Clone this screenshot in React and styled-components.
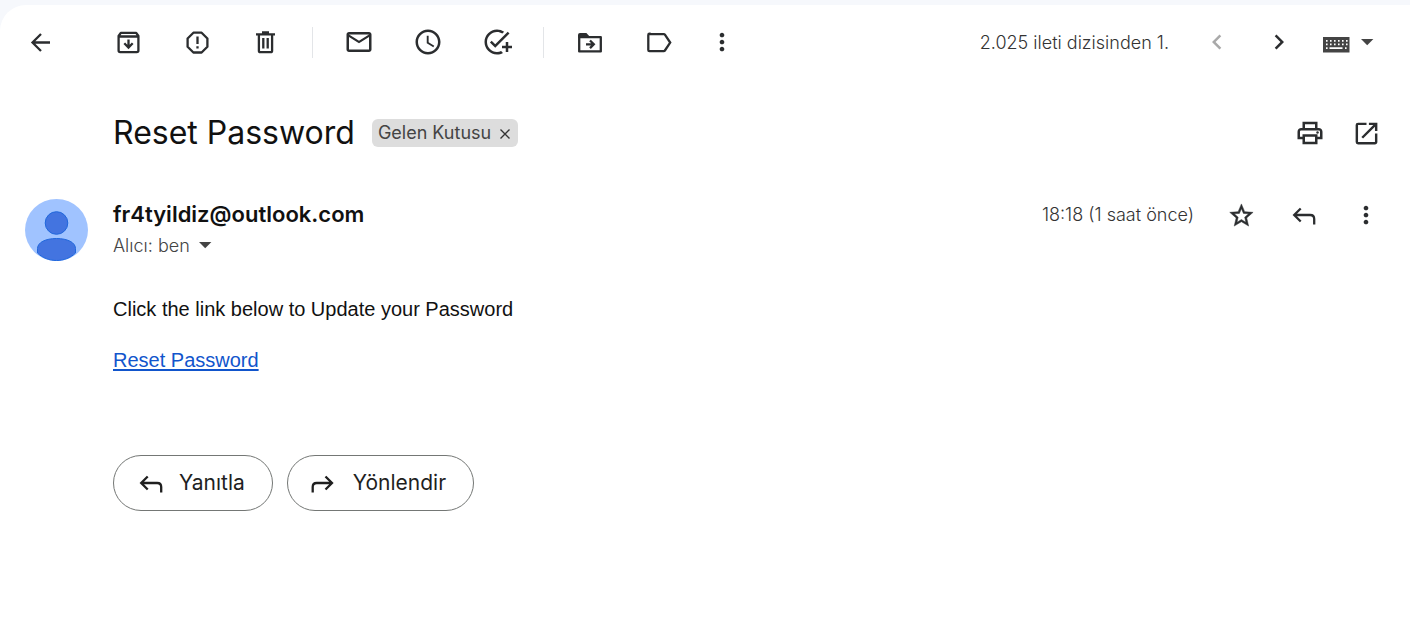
import React from "react";
import styled, { createGlobalStyle } from "styled-components";
import {
  MdMailOutline,
  MdAccessTime,
  MdAddTask,
  MdOutlinePrint,
  MdOpenInNew,
  MdChevronLeft,
  MdChevronRight,
  MdMoreVert,
} from "react-icons/md";

const GlobalStyle = createGlobalStyle`
  * { box-sizing: border-box; }
  body {
    margin: 0;
    background: #f6f8fc;
    color: #1f1f1f;
    font-family: Inter, "Liberation Sans", sans-serif;
  }
`;

const Page = styled.div`
  min-height: 100vh;
  padding-top: 5px;
  display: flex;
`;

const Card = styled.main`
  flex: 1;
  min-width: 0;
  background: #fff;
  border-radius: 26px 0 0 0;
  padding: 15px 22px 48px 0;
`;

const Toolbar = styled.header`
  display: flex;
  align-items: center;
  justify-content: space-between;
  padding-left: 18px;
`;

const ToolGroup = styled.div`
  display: flex;
  align-items: center;
  gap: ${(p) => p.$gap}px;
`;

const IconButton = styled.button`
  display: inline-flex;
  align-items: center;
  justify-content: center;
  flex: none;
  width: ${(p) => (p.$narrow ? 32 : 44)}px;
  height: 44px;
  padding: 0;
  border: 0;
  border-radius: 22px;
  background: none;
  color: ${(p) => (p.$muted ? "#a9a9a9" : "#2b2d2f")};
  cursor: pointer;

  svg { display: block; flex: none; }
`;

const BackButton = styled(IconButton)`
  margin-right: 44px;
`;

const Tools = styled.div`
  display: flex;
  align-items: center;
  gap: 25px;
`;

const Divider = styled.span`
  width: 1px;
  height: 31px;
  margin: 0 24px;
  background: #e3e5e8;
`;

const Counter = styled.span`
  margin-right: 8px;
  padding-top: 2px;
  font-size: 18px;
  font-weight: 300;
  line-height: 24px;
  color: #333;
  white-space: nowrap;
`;

const InputToolButton = styled(IconButton)`
  width: auto;
  gap: 11px;
  padding: 0 14px 0 4px;
`;

const SubjectRow = styled.div`
  display: flex;
  align-items: center;
  justify-content: space-between;
  margin-top: 47px;
  padding-left: 113px;
`;

const SubjectTitle = styled.div`
  display: flex;
  align-items: center;
  gap: 17px;
`;

const Subject = styled.h1`
  margin: 0;
  font-size: 32px;
  font-weight: 400;
  line-height: 44px;
  color: #111;
  white-space: nowrap;
`;

const Chip = styled.span`
  display: inline-flex;
  align-items: center;
  gap: 8px;
  height: 28px;
  padding: 0 7px 0 6px;
  border-radius: 6px;
  background: #ddd;
  color: #444;
  font-size: 18px;
  line-height: 24px;
  white-space: nowrap;
`;

const ChipClose = styled.button`
  display: flex;
  padding: 2px 0 0;
  border: 0;
  background: none;
  color: #333;
  cursor: pointer;
`;

const Message = styled.article`
  display: grid;
  grid-template-columns: 63px 1fr;
  column-gap: 25px;
  margin-top: 44px;
  padding-left: 25px;
`;

const SenderRow = styled.div`
  display: flex;
  align-items: flex-start;
  justify-content: space-between;
`;

const Sender = styled.h2`
  margin: 0;
  font-size: 22px;
  font-weight: 600;
  line-height: 31px;
  color: #111;
  white-space: nowrap;
`;

const Recipient = styled.button`
  display: flex;
  align-items: center;
  gap: 9px;
  padding: 0;
  border: 0;
  background: none;
  color: #444;
  font-family: inherit;
  font-size: 18px;
  font-weight: 300;
  line-height: 31px;
  cursor: pointer;
`;

const MessageActions = styled.div`
  display: flex;
  align-items: center;
  gap: 18px;
  height: 31px;
`;

const Time = styled.time`
  margin-right: 8px;
  font-size: 18px;
  font-weight: 300;
  color: #333;
  white-space: nowrap;
`;

const Content = styled.div`
  grid-column: 2;
  display: flex;
  flex-direction: column;
  align-items: flex-start;
  gap: 27px;
  margin-top: 36px;
  font-family: "Liberation Sans", Arial, sans-serif;
  font-size: 20px;
  line-height: 24px;
  color: #111;
`;

const Paragraph = styled.p`
  margin: 0;
`;

const ResetLink = styled.a`
  color: #15c;
  text-decoration: underline;
  text-underline-offset: 2px;
  text-decoration-thickness: 2px;
`;

const Replies = styled.div`
  grid-column: 2;
  display: flex;
  gap: 14px;
  margin-top: 83px;
`;

const ReplyButton = styled.button`
  display: inline-flex;
  align-items: center;
  gap: 14px;
  height: 56px;
  padding: 0 27px 0 23px;
  border: 1px solid #747775;
  border-radius: 28px;
  background: #fff;
  color: #1f1f1f;
  font-family: inherit;
  font-size: 21px;
  font-weight: 400;
  line-height: 28px;
  cursor: pointer;
`;

const Icon = ({ children }) => (
  <svg
    width="28"
    height="28"
    viewBox="0 0 28 28"
    fill="none"
    stroke="currentColor"
    strokeWidth="2.3"
    aria-hidden="true"
  >
    {children}
  </svg>
);

const BackIcon = () => (
  <Icon>
    <path d="M24 14.5H6.5M15 6l-8.5 8.5L15 23" />
  </Icon>
);

const ArchiveIcon = () => (
  <Icon>
    <path d="M4.6 8v14.6q0 1.6 1.6 1.6h16.6q1.6 0 1.6-1.6V8l-2.2-3.2H6.8zM4.6 8.5h19.8" strokeLinejoin="round" />
    <path d="M14.5 11.5v7.5M10.3 15.3l4.2 4.2 4.2-4.2" />
  </Icon>
);

const SpamIcon = () => (
  <Icon>
    <path d="M10.4 4.7h8.2l5.8 5.8v8.2l-5.8 5.8h-8.2l-5.8-5.8v-8.2z" strokeLinejoin="round" />
    <path d="M14.5 8.5V16M14.5 18.2v2.3" />
  </Icon>
);

const TrashIcon = () => (
  <Icon>
    <path d="M4 6.3h19M10 4.4h7" />
    <path d="M6.9 6.5v16.2q0 1.5 1.5 1.5h10.2q1.5 0 1.5-1.5V6.5M11.3 10v10.6M15.7 10v10.6" />
  </Icon>
);

const MoveIcon = () => (
  <Icon>
    <path d="M3.2 9.2h21.6v14.2H3.2z" strokeLinejoin="round" />
    <path d="M2 9.5V7q0-2 2-2h6.4l3 3.2v1.6H2z" fill="currentColor" stroke="none" />
    <path d="M10 16.3h7.5M14 12.5l3.8 3.8-3.8 3.8" />
  </Icon>
);

const LabelIcon = () => (
  <Icon>
    <path d="M4.5 6.1h14.3q.7 0 1.1.6l5.3 7.9-5.3 7.9q-.4.6-1.1.6H4.5q-1.2 0-1.2-1.2v-15q0-1.2 1.2-1.2z" />
  </Icon>
);

const StarIcon = () => (
  <svg width="28" height="28" viewBox="0.5 -0.5 24 24" fill="currentColor" stroke="currentColor" strokeWidth="0.4" aria-hidden="true">
    <path d="M22 9.24l-7.19-.62L12 2 9.19 8.63 2 9.24l5.46 4.73L5.82 21 12 17.27 18.18 21l-1.63-7.03L22 9.24zM12 15.4l-3.76 2.27 1-4.28-3.32-2.88 4.38-.38L12 6.1l1.71 4.04 4.38.38-3.32 2.88 1 4.28L12 15.4z" />
  </svg>
);

const keyColumns = [3, 7, 11, 15, 19, 23];

const KeyboardIcon = () => (
  <svg width="27" height="28" viewBox="0 0 27 28" aria-hidden="true">
    <path d="M0 9h26.5v15.5H0z" fill="#444" />
    {keyColumns.map((x) => (
      <path key={x} d={`M${x} 12h1.6v1.8h-1.6zM${x} 15.5h1.6v1.8h-1.6z`} fill="#fff" />
    ))}
    <path d="M3 19.3h1.6V21H3zM6.5 19.3h13V21h-13zM22 19.3h1.6V21H22z" fill="#fff" />
  </svg>
);

const CaretIcon = () => (
  <svg width="13" height="7" viewBox="0 0 13 7" aria-hidden="true">
    <path d="M0 0h12.4L6.2 6.3z" fill="#444" />
  </svg>
);

const ReplyIcon = ({ forward }) => (
  <Icon>
    <path
      d={
        forward
          ? "M1.7 23.5V18q0-4 4-4H21M14.5 7.5L21 14l-6.5 6.5"
          : "M24.2 23.5V18q0-4-4-4h-16M10.7 7.5L4.2 14l6.5 6.5"
      }
    />
  </Icon>
);

const CloseIcon = () => (
  <svg width="12" height="12" viewBox="0 0 12 12" fill="none" stroke="currentColor" strokeWidth="1.4" aria-hidden="true">
    <path d="M1.5 1.5l9 9M10.5 1.5l-9 9" />
  </svg>
);

const Avatar = () => (
  <svg width="63" height="62" viewBox="0 0 63 62" role="img" aria-label="Profil">
    <ellipse cx="31.5" cy="31" rx="31.5" ry="31" fill="#a0c3ff" />
    <g fill="#4374e0" stroke="#2067dc">
      <circle cx="31.5" cy="24" r="11.3" />
      <path d="M12.5 54v-4.500c0-6 8-10 19-10s19 4 19 10V54c-5 5-12 7.500-19 7.500s-14-2.500-19-7.500z" />
    </g>
  </svg>
);

export default function App() {
  return (
    <>
      <GlobalStyle />
      <Page>
        <Card>
          <Toolbar>
            <ToolGroup $gap={0}>
              <BackButton aria-label="Geri"><BackIcon /></BackButton>
              <Tools>
                <IconButton aria-label="Arşivle"><ArchiveIcon /></IconButton>
                <IconButton aria-label="Spam bildir"><SpamIcon /></IconButton>
                <IconButton aria-label="Sil"><TrashIcon /></IconButton>
              </Tools>
              <Divider />
              <Tools>
                <IconButton aria-label="Okunmadı olarak işaretle"><MdMailOutline size={30} /></IconButton>
                <IconButton aria-label="Ertele"><MdAccessTime size={30} /></IconButton>
                <IconButton aria-label="Görevlere ekle"><MdAddTask size={30} /></IconButton>
              </Tools>
              <Divider />
              <Tools>
                <IconButton aria-label="Taşı"><MoveIcon /></IconButton>
                <IconButton aria-label="Etiketler"><LabelIcon /></IconButton>
                <IconButton $narrow aria-label="Diğer"><MdMoreVert size={28} /></IconButton>
              </Tools>
            </ToolGroup>
            <ToolGroup $gap={18}>
              <Counter>2.025 ileti dizisinden 1.</Counter>
              <IconButton $muted aria-label="Daha yeni"><MdChevronLeft size={30} /></IconButton>
              <IconButton aria-label="Daha eski"><MdChevronRight size={30} /></IconButton>
              <InputToolButton aria-label="Giriş araçları">
                <KeyboardIcon />
                <CaretIcon />
              </InputToolButton>
            </ToolGroup>
          </Toolbar>

          <SubjectRow>
            <SubjectTitle>
              <Subject>Reset Password</Subject>
              <Chip>
                Gelen Kutusu
                <ChipClose aria-label="Etiketi kaldır"><CloseIcon /></ChipClose>
              </Chip>
            </SubjectTitle>
            <ToolGroup $gap={12}>
              <IconButton aria-label="Yazdır"><MdOutlinePrint size={30} /></IconButton>
              <IconButton aria-label="Yeni pencerede aç"><MdOpenInNew size={29} /></IconButton>
            </ToolGroup>
          </SubjectRow>

          <Message>
            <Avatar />
            <SenderRow>
              <div>
                <Sender>fr4tyildiz@outlook.com</Sender>
                <Recipient>
                  Alıcı: ben
                  <CaretIcon />
                </Recipient>
              </div>
              <MessageActions>
                <Time>18:18 (1 saat önce)</Time>
                <IconButton aria-label="Yıldız ekle"><StarIcon /></IconButton>
                <IconButton aria-label="Yanıtla"><ReplyIcon /></IconButton>
                <IconButton aria-label="Diğer"><MdMoreVert size={28} /></IconButton>
              </MessageActions>
            </SenderRow>
            <Content>
              <Paragraph>Click the link below to Update your Password</Paragraph>
              <ResetLink href="#reset">Reset Password</ResetLink>
            </Content>
            <Replies>
              <ReplyButton><ReplyIcon />Yanıtla</ReplyButton>
              <ReplyButton><ReplyIcon forward />Yönlendir</ReplyButton>
            </Replies>
          </Message>
        </Card>
      </Page>
    </>
  );
}
